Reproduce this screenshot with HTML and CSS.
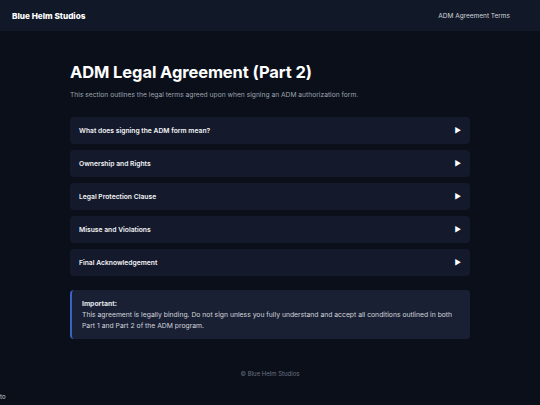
FILE: index.html
```html
<!DOCTYPE html>
<html lang="en">
<head>
    <meta charset="UTF-8">
    <meta name="viewport" content="width=device-width, initial-scale=1.0">
    <title>ADM Legal Agreement (Part 2)</title>
    <link rel="stylesheet" href="styles.css">
</head>
<body>
    <header class="site-header">
        <div class="brand">Blue Helm Studios</div>
        <nav class="nav-link">ADM Agreement Terms</nav>
    </header>

    <main class="content">
        <h1>ADM Legal Agreement (Part 2)</h1>
        <p class="intro">This section outlines the legal terms agreed upon when signing an ADM authorization form.</p>

        <div class="accordion">
            <div class="acc-item"><span>What does signing the ADM form mean?</span><span class="arrow">&#9654;</span></div>
            <div class="acc-item"><span>Ownership and Rights</span><span class="arrow">&#9654;</span></div>
            <div class="acc-item"><span>Legal Protection Clause</span><span class="arrow">&#9654;</span></div>
            <div class="acc-item"><span>Misuse and Violations</span><span class="arrow">&#9654;</span></div>
            <div class="acc-item"><span>Final Acknowledgement</span><span class="arrow">&#9654;</span></div>
        </div>

        <div class="notice">
            <strong>Important:</strong><br>
            This agreement is legally binding. Do not sign unless you fully understand and accept all conditions outlined in both Part 1 and Part 2 of the ADM program.
        </div>
    </main>

    <footer class="site-footer">&copy; Blue Helm Studios</footer>

    <span class="stray">to</span>
</body>
</html>
```

FILE: styles.css
```css
body {
    margin: 0;
    font-family: Inter, "Noto Sans", sans-serif;
    background-color: #0b0f1a;
    color: #e5e7eb;
    min-height: 405px;
}
.site-header {
    height: 31px;
    background-color: #111827;
    display: flex;
    align-items: center;
    justify-content: space-between;
    padding: 0 30px 0 12px;
}
.brand {
    font-size: 8.2px;
    font-weight: 800;
    color: #fff;
}
.nav-link {
    font-size: 6.5px;
    color: #d1d5db;
}
.content {
    width: 400px;
    margin: 0 auto;
    padding-top: 31px;
}
h1 {
    font-size: 16.5px;
    font-weight: 700;
    letter-spacing: -0.1px;
    color: #fff;
    margin: 0 0 9px;
}
.intro {
    font-size: 6.7px;
    color: #9ca3af;
    margin: 0 0 18px;
}
.accordion {
    display: flex;
    flex-direction: column;
    gap: 6px;
}
.acc-item {
    height: 27px;
    background-color: #141a2c;
    border-radius: 4px;
    display: flex;
    align-items: center;
    justify-content: space-between;
    padding: 0 9px;
    font-size: 6.75px;
    font-weight: 600;
    color: #f3f4f6;
}
.arrow {
    font-size: 7px;
    color: #fff;
}
.notice {
    margin-top: 14px;
    background-color: #1a2034;
    border-left: 2px solid #3b63c4;
    border-radius: 4px;
    padding: 8px 10px;
    font-size: 6.8px;
    line-height: 11px;
    color: #d1d5db;
}
.notice strong {
    color: #e5e7eb;
}
.site-footer {
    text-align: center;
    font-size: 6px;
    color: #6b7280;
    margin-top: 31px;
}
.stray {
    position: absolute;
    left: 0;
    top: 393px;
    font-size: 6px;
    color: #d1d5db;
}
```
